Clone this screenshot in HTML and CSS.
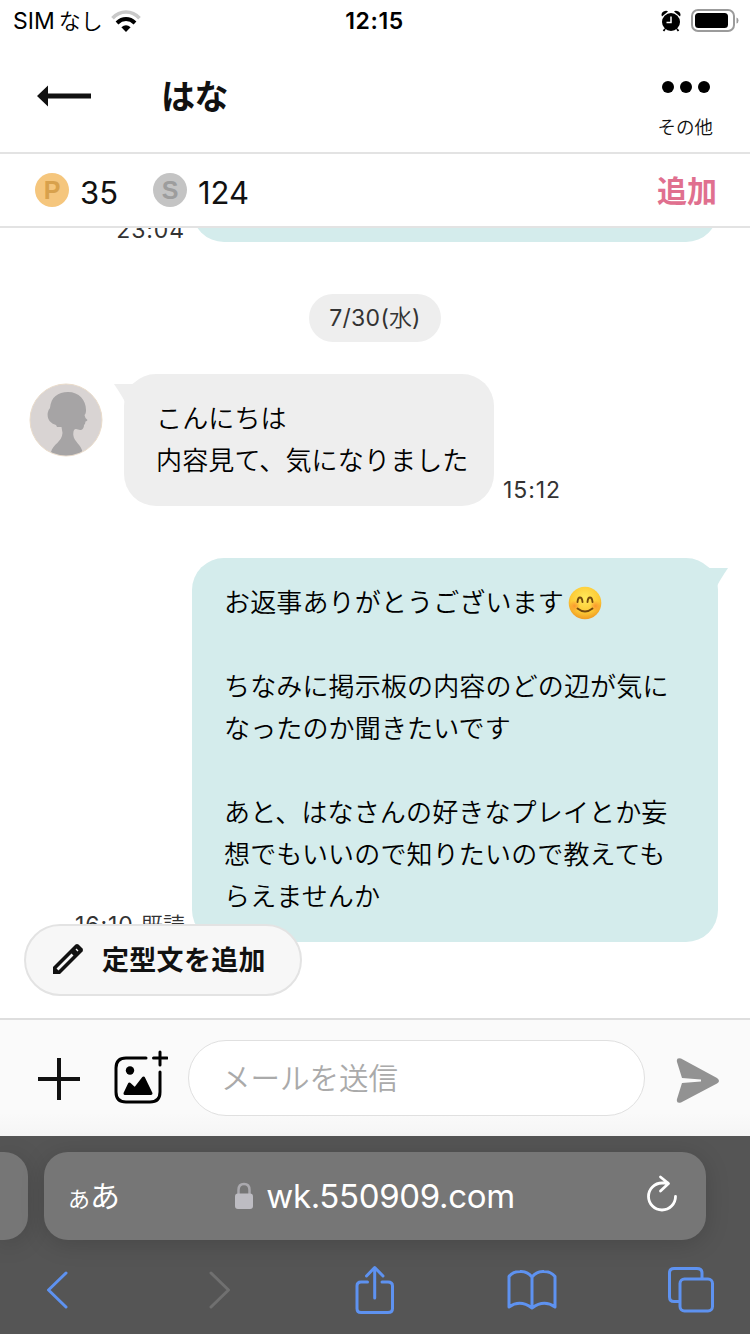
FILE: index.html
```html
<!DOCTYPE html>
<html lang="ja">
<head>
<meta charset="utf-8">
<title>はな</title>
<link rel="stylesheet" href="styles.css">
</head>
<body>
<div class="screen">
  <div class="status">
    <div class="carrier"><span class="sim">SIM</span><span class="nashi">なし</span>
      <svg class="wifi" width="30" height="24" viewBox="0 0 30 24" fill="none">
        <path d="M1.500 8.200C9 0 21 0 28.500 8.200" stroke="#c9c9c9" stroke-width="3.600"/>
        <path d="M6 13C11.500 7.800 18.500 7.800 24 13" stroke="#000" stroke-width="4"/>
        <path d="M10.400 17.300Q15 13 19.600 17.300L15 22Z" fill="#000"/>
      </svg>
    </div>
    <div class="clock">12:15</div>
    <div class="indicators">
      <svg width="20" height="22" viewBox="0 0 20 22">
        <circle cx="10" cy="12" r="9"/>
        <path d="M1 6.500Q-.5 3 2.500 1.500T7 1.500ZM19 6.500Q20.500 3 17.500 1.500T13 1.500Z"/>
        <path d="M4 19L2.500 21M16 19L17.500 21" stroke="#000" stroke-width="1.800" fill="none"/>
        <path d="M10 6.500V12.500H5.500" stroke="#fff" stroke-width="1.500" fill="none"/>
      </svg>
      <svg width="50" height="24" viewBox="0 0 50 24">
        <rect x="2" y="1" width="42" height="21" rx="6" fill="none" stroke="#9b9b9b" stroke-width="2"/>
        <rect x="5" y="4" width="33" height="15" rx="3.500"/>
        <path d="M46.500 8.500Q48.500 9 48.500 11.500T46.500 14.500Z" fill="#9b9b9b"/>
      </svg>
    </div>
  </div>

  <header class="header">
    <svg class="back" width="54" height="22" viewBox="0 0 54 22" fill="#111"><path d="M0 11L11 .5V8.500H54V13.500H11V21.500Z"/></svg>
    <h1 class="name">はな</h1>
    <div class="more">
      <svg width="50" height="14" viewBox="0 0 50 14"><circle cx="7" cy="7" r="6"/><circle cx="25" cy="7" r="6"/><circle cx="43" cy="7" r="6"/></svg>
      <span class="more-label">その他</span>
    </div>
  </header>

  <div class="points">
    <span class="coin coin-p">P</span><span class="amount amount-p">35</span>
    <span class="coin coin-s">S</span><span class="amount">124</span>
    <span class="add">追加</span>
  </div>

  <main class="chat">
    <div class="row row-me row-prev"><span class="time">23:04</span><div class="bubble bubble-me"></div></div>
    <div class="date"><span class="date-num">7/30(</span>水<span class="date-num">)</span></div>
    <div class="row row-her">
      <svg class="avatar" width="74" height="74" viewBox="0 0 74 74">
        <defs><clipPath id="face"><circle cx="37" cy="37" r="35.500"/></clipPath></defs>
        <circle cx="37" cy="37" r="36" fill="#d9d4d3" stroke="#eadccb" stroke-width="1"/>
        <path clip-path="url(#face)" fill="#a6a4a5" d="M21 74L22 69C24 61 33 59 33.500 50L32.500 44H28L27 42C21 40 18 36 18.700 30Q19 27 21 25C22 14 29 9 39 9C50 9 57 17 57 27Q57 31 55.500 32L56.500 35L58.500 37Q58 38 56.500 38.500L56 41Q54.500 42 55 43Q54 47.500 51 47L47 46Q44 46 44.300 52C45 59 52 61 53.500 69L54 74Z"/>
      </svg>
      <div class="bubble bubble-her">
        <svg class="tail tail-her" width="36" height="24" viewBox="0 0 36 24"><path d="M0 0H36L14 24Q9 13 0 0" fill="#eee"/></svg>
        こんにちは<br>内容見て、気になりました
      </div>
      <span class="time">15:12</span>
    </div>
    <div class="row row-me">
      <span class="time">16:10 <span class="read">既読</span></span>
      <div class="bubble bubble-me">
        <svg class="tail tail-me" width="36" height="24" viewBox="0 0 36 24"><path d="M36 0H0L22 24Q27 13 36 0" fill="#d4ecec"/></svg>
        お返事ありがとうございます<svg class="emoji" width="34" height="34" viewBox="0 0 34 34" fill="none">
          <defs>
            <radialGradient id="skin" cx=".5" cy=".35" r=".68"><stop offset="0" stop-color="#ffe95a"/><stop offset=".65" stop-color="#fdc935"/><stop offset="1" stop-color="#ee9420"/></radialGradient>
            <radialGradient id="cheek"><stop offset="0" stop-color="#fb8a2d" stop-opacity=".8"/><stop offset="1" stop-color="#fb8a2d" stop-opacity="0"/></radialGradient>
          </defs>
          <circle cx="17" cy="17" r="16.300" fill="url(#skin)"/>
          <circle cx="6.500" cy="20" r="5.500" fill="url(#cheek)"/><circle cx="27.500" cy="20" r="5.500" fill="url(#cheek)"/>
          <path d="M9.500 16C10 10 14 10 14.500 16M19.500 16C20 10 24 10 24.500 16M9.500 22.500Q17 28.500 24.500 22.500" stroke="#74490d" stroke-width="1.900" stroke-linecap="round"/>
        </svg><br><br>ちなみに掲示板の内容のどの辺が気に<br>なったのか聞きたいです<br><br>あと、はなさんの好きなプレイとか妄<br>想でもいいので知りたいので教えても<br>らえませんか
      </div>
    </div>
    <div class="template">
      <svg width="32" height="32" viewBox="0 0 32 32"><path fill="#111" d="M1 31V24L23.500 1.500Q25 .5 26.500 1.500L30.500 5.500Q31.500 7 30.500 8.500L8 31Z"/><path d="M5.500 26.500L20.500 11.500M24.500 7.500L25.500 6.500" stroke="#f7f7f7" stroke-width="2.800"/></svg>
      <span>定型文を追加</span>
    </div>
  </main>

  <footer class="composer">
    <svg class="plus" width="42" height="42" viewBox="0 0 42 42" stroke="#111" stroke-width="4"><path d="M21 0V42M0 21H42"/></svg>
    <svg class="photo" width="54" height="54" viewBox="0 0 54 54" fill="none" stroke="#000" stroke-width="3" stroke-linecap="round" stroke-linejoin="round">
      <path d="M32 8H12Q2 8 2 18V42Q2 52 12 52H36Q46 52 46 42V22M46 2V15M39.500 8H53"/>
      <circle cx="16" cy="20.500" r="4.200" fill="#000" stroke="none"/>
      <path d="M11 43.500L15.500 34L21 39L29.500 28L37 43.500Z" fill="#000"/>
    </svg>
    <div class="field">メールを送信</div>
    <svg class="send" width="44" height="48" viewBox="0 0 44 48"><path fill="#929292" d="M1 5Q0 0 5 1.500L41 21Q45 24 41 26.500L5 45.500Q0 47 1 42L6 26L25 24.500V22.500L6 21Z"/></svg>
  </footer>

  <div class="browser">
    <div class="tabs">
      <div class="tab-prev"></div>
      <div class="address">
        <span class="reader"><span class="reader-small">あ</span>あ</span>
        <span class="host"><svg width="20" height="28" viewBox="0 0 20 28"><path d="M4.500 12V8Q4.500 2 10 2T15.500 8V12" fill="none" stroke="#aaa9ae" stroke-width="2.500"/><rect x="1" y="11.500" width="18" height="15.500" rx="3" fill="#bdbcc2"/></svg><span class="url">wk.550909.com</span></span>
        <svg class="reload" width="32" height="38" viewBox="0 0 32 38" fill="none" stroke="#fff" stroke-width="2.800" stroke-linecap="round" stroke-linejoin="round"><path d="M29.500 21.500A13.500 13.500 0 1 1 16 8H22M14.500 2L22.500 8.500L14.500 16"/></svg>
      </div>
    </div>
    <nav class="toolbar">
      <svg class="prev" width="22" height="38" viewBox="0 0 22 38"><path d="M20 2L2.500 19L20 36"/></svg>
      <svg class="next" width="22" height="38" viewBox="0 0 22 38"><path d="M2 2L19.500 19L2 36"/></svg>
      <svg class="share" width="40" height="50" viewBox="0 0 40 50"><path d="M12.500 17H6Q2 17 2 21V43.500Q2 47.500 6 47.500H33Q37.500 47.500 37.500 43.500V21Q37.500 17 33 17H27M19.700 33V3M11.500 11L19.700 2.500L28 11"/></svg>
      <svg class="book" width="50" height="42" viewBox="0 0 50 42"><path d="M25 39V8Q20 2 13 2.500Q6 2.500 2 7.500V38Q13 30 25 39Q37 30 48 38V7.500Q44 2.500 37 2.500Q30 2 25 8"/></svg>
      <svg width="46" height="46" viewBox="0 0 46 46"><path d="M11.500 34.500H6Q1.500 34.500 1.500 30V6Q1.500 1.500 6 1.500H29Q34 1.500 34 6V11"/><rect x="12" y="12" width="32.500" height="32" rx="4.500"/></svg>
    </nav>
  </div>
</div>
</body>
</html>
```

FILE: styles.css
```css
* { box-sizing: border-box; }
body { margin: 0; background: #fff; color: #111; font-family: Inter, "Noto Sans CJK JP", sans-serif; }
svg { display: block; flex: none; }
.screen { width: 750px; height: 1334px; display: flex; flex-direction: column; overflow: hidden; }

.status { height: 40px; flex: none; display: grid; grid-template-columns: 1fr auto 1fr; align-items: center; padding: 0 10px 0 13px; color: #000; }
.carrier { display: flex; align-items: center; font-size: 23px; line-height: 42px; }
.sim { letter-spacing: 0; }
.nashi { margin-left: 4px; padding-bottom: 3px; font-family: "Noto Sans CJK JP", sans-serif; font-size: 22px; font-weight: 350; line-height: 39px; }
.wifi { margin: 2px 0 0 8px; }
.clock { font-size: 23px; font-weight: 600; letter-spacing: .6px; line-height: 42px; margin-left: -4px; }
.indicators { display: flex; justify-content: flex-end; align-items: center; gap: 9px; }

.header { height: 114px; flex: none; display: flex; padding: 0 36px 0 37px; border-bottom: 2px solid #e3e3e3; }
.back { margin-top: 45px; }
.name { margin: 29px 0 0 70px; font-family: "Noto Sans CJK JP", sans-serif; font-size: 34px; font-weight: 700; line-height: 52px; letter-spacing: -.5px; }
.more { margin-left: auto; padding-top: 40px; display: flex; flex-direction: column; align-items: center; }
.more-label { margin: 18px 1px 0 0; font-size: 18.500px; font-weight: 350; line-height: 30px; }

.points { height: 74px; flex: none; display: flex; align-items: center; padding: 0 33px 0 35px; border-bottom: 2px solid #e3e3e3; }
.coin { width: 34px; height: 34px; border-radius: 50%; font-family: "Liberation Sans", Arial, sans-serif; font-size: 25px; font-weight: 700; line-height: 34px; text-align: center; }
.coin-p { background: #f5c67d; color: #d8a14c; }
.coin-s { background: #c4c4c4; color: #9d9d9d; }
.amount { margin: 6px 0 0 11px; font-size: 31px; line-height: 40px; }
.amount-p { margin-right: 35px; }
.add { margin: -3px 0 0 auto; color: #e0708f; font-family: "Noto Sans CJK JP", sans-serif; font-size: 30px; font-weight: 700; }

.chat { flex: 1; min-height: 0; position: relative; overflow: hidden; display: flex; flex-direction: column; }
.row { display: flex; flex: none; align-items: flex-end; }
.row-me { justify-content: flex-end; padding-right: 32px; }
.row-prev { margin-top: -86px; height: 100px; }
.row-prev .bubble { height: 100px; }
.row-her { margin-top: 32px; margin-bottom: 52px; padding-left: 29px; }
.bubble { position: relative; border-radius: 32px; padding: 22px 0 26px 32px; color: #000; font-family: "Noto Sans CJK JP", sans-serif; font-size: 26px; font-weight: 350; letter-spacing: .15px; line-height: 42px; white-space: nowrap; }
.bubble-me { width: 526px; background: #d4ecec; }
.bubble-her { width: 370px; margin-left: 21px; background: #eee; }
.time { color: #333; font-size: 23px; line-height: 32px; letter-spacing: .9px; }
.row-me .time { margin-right: 7px; margin-bottom: 1px; }
.row-prev .time { margin-bottom: -4px; }
.row-her .time { margin-left: 9px; }
.read { font-size: 22px; font-weight: 350; letter-spacing: 0; }
.avatar { align-self: flex-start; margin-top: 9px; }
.tail { position: absolute; top: 10px; }
.tail-her { left: -10px; }
.tail-me { right: -10px; }
.emoji { display: inline-block; vertical-align: -8px; margin-left: 4px; }
.date { align-self: center; flex: none; margin-top: 52px; width: 132px; height: 48px; text-align: center; border-radius: 24px; background: #eee; color: #333; font-size: 23px; font-weight: 350; line-height: 48px; }
.date-num { font-weight: 400; letter-spacing: .3px; }
.template { position: absolute; left: 24px; bottom: 22px; width: 278px; height: 72px; display: flex; align-items: center; gap: 18px; padding: 0 0 2px 26px; border: 2px solid #e3e3e3; border-radius: 36px; background: #f7f7f7; font-family: "Noto Sans CJK JP", sans-serif; font-size: 27px; font-weight: 700; letter-spacing: .3px; line-height: 66px; white-space: nowrap; }

.composer { height: 118px; flex: none; display: flex; align-items: center; padding: 0 30px 0 37px; border-top: 2px solid #dedede; background: linear-gradient(#fafafa 80%, #f5f5f5); }
.plus { margin-top: 2px; margin-left: 1px; }
.photo { margin-left: 34px; margin-top: -3px; }
.field { width: 458px; height: 76px; margin: 0 31px 0 20px; padding-left: 32px; border: 1px solid #e0e0e0; border-radius: 38px; background: #fff; color: #aaa; font-family: "Noto Sans CJK JP", sans-serif; font-size: 29.500px; font-weight: 350; line-height: 71px; }
.send { margin-top: 5px; }

.browser { height: 198px; flex: none; background: #555; padding-top: 16px; }
.tabs { display: flex; gap: 16px; }
.tab-prev { width: 28px; height: 88px; border-radius: 0 24px 24px 0; background: #767676; box-shadow: 0 4px 24px rgba(0, 0, 0, .16); }
.address { width: 662px; height: 88px; border-radius: 24px; background: #767676; box-shadow: 0 4px 24px rgba(0, 0, 0, .16); color: #fff; display: grid; grid-template-columns: 1fr auto 1fr; align-items: center; padding: 0 28px 0 24px; }
.reader { font-family: "Noto Sans CJK JP", sans-serif; font-size: 30px; line-height: 84px; margin-bottom: 4px; }
.reader-small { font-size: 22px; }
.host { display: flex; align-items: center; gap: 12px; margin-left: 3px; padding-bottom: 3px; }
.url { font-size: 33px; letter-spacing: -.35px; line-height: 85px; }
.reload { justify-self: end; margin-bottom: 8px; }
.toolbar { display: flex; align-items: center; height: 100px; padding-left: 46px; fill: none; stroke: #5e92f0; stroke-width: 3; stroke-linecap: round; stroke-linejoin: round; }
.prev { margin-right: 141px; }
.next { margin-right: 124px; stroke: #707070; }
.share { margin-right: 112px; }
.book { margin-right: 111px; }
```
